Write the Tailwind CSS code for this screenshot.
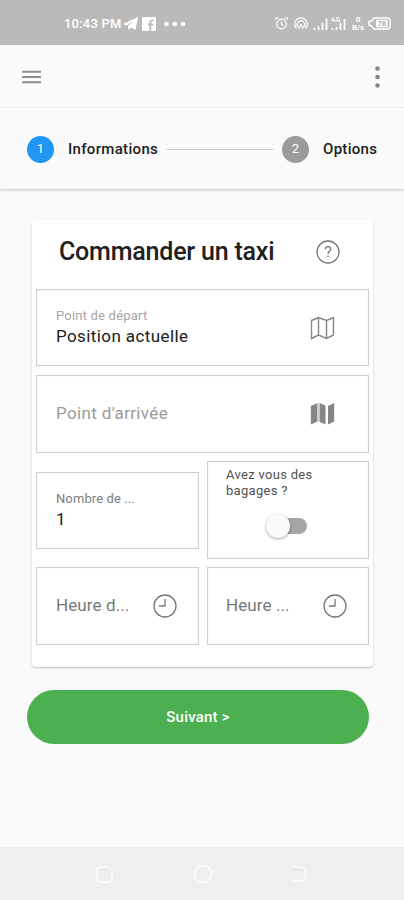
<!DOCTYPE html>
<html lang="fr">
  <head>
    <meta charset="UTF-8" />
    <meta name="viewport" content="width=device-width, initial-scale=1.0" />
    <title>Commander un taxi</title>
    <script src="https://cdn.jsdelivr.net/npm/@tailwindcss/browser@4"></script>
  </head>
  <body class="bg-[#fafafa] font-[Roboto,sans-serif] text-[#202020]">
    <div class="flex h-[900px] w-[404px] flex-col overflow-hidden">
      <!-- Status bar -->
      <div class="flex h-[45px] shrink-0 items-center bg-[#bababa] pl-16 pr-[13px] pt-[2px] text-white">
        <span class="w-[59px] whitespace-nowrap text-[13px] font-medium leading-none tracking-[0.2px]">10:43 PM</span>
        <svg class="h-[14px] w-[15px]" viewBox="0 0 15 14" fill="currentColor"><path d="M0 7 15 0 12.500 13 8 10.500 5.500 13 5 9 11 3.500 3.500 8.500Z" /></svg>
        <svg class="ml-1 h-[14px] w-[14px]" viewBox="0 0 14 14"><path fill="currentColor" d="M1 0h12a1 1 0 0 1 1 1v12a1 1 0 0 1-1 1H1a1 1 0 0 1-1-1V1a1 1 0 0 1 1-1Z" /><path d="M8.300 14V5.500Q8.300 3 11.500 3.400M6 7.500h5" fill="none" stroke="#bababa" stroke-width="1.800" /></svg>
        <svg class="ml-2 h-[6px] w-[22px]" viewBox="0 0 22 6" fill="currentColor"><circle cx="2.600" cy="3" r="2.300" /><circle cx="10.800" cy="3" r="2.300" /><circle cx="19" cy="3" r="2.300" /></svg>
        <div class="ml-auto flex items-center">
          <svg class="h-[13px] w-[13px]" viewBox="0 0 13 13" fill="none" stroke="currentColor" stroke-width="1.200"><circle cx="6.500" cy="7" r="4.800" /><path d="M.8 3V1h3M12.200 3V1h-3M6.500 4.500V7.300l2 1" /></svg>
          <svg class="ml-[6px] h-[13px] w-[14px]" viewBox="0 0 14 13" fill="none" stroke="currentColor" stroke-width="1.200"><path d="M2.500 11.500a6.300 6.300 0 1 1 9 0M4.300 10a3.700 3.700 0 1 1 5.400 0M7 7 4.800 12M7 7l2.200 5" /></svg>
          <svg class="ml-[5px] h-[13px] w-[15px]" viewBox="0 0 15 13" stroke="currentColor" stroke-width="1.700"><path d="M1.500 13v-2M5.500 13V9.500M9.500 13V6M13.500 13V1.500" /></svg>
          <svg class="ml-[3px] h-[15px] w-[15px]" viewBox="0 0 15 15" stroke="currentColor" stroke-width="1.700"><path d="M1.500 14v-2M5.500 14v-3M9.500 14V7M13.500 14V3" /><path d="M2.500 1.500 1 4.500h3M3.500 3v3M8.500 1.700H6v3.600h2.500v-2" fill="none" stroke-width="1.100" /></svg>
          <div class="ml-[5px] flex w-[14px] flex-col items-center text-[8px] font-bold leading-[8px]"><span>0</span><span>B/s</span></div>
          <svg class="ml-[3px] h-[13px] w-[23px]" viewBox="0 0 23 13"><path d="M6 1h13a3 3 0 0 1 3 3v5a3 3 0 0 1-3 3H6L3 8.500H1v-4h2Z" fill="none" stroke="currentColor" stroke-width="1.500" /><rect x="8" y="2.800" width="11.500" height="7.500" rx="1" fill="currentColor" /><text x="9.500" y="9.200" font-size="7.500" font-weight="700" fill="#aaa">78</text></svg>
        </div>
      </div>

      <!-- App bar -->
      <div class="flex h-[63px] shrink-0 items-center justify-between border-b border-[#f4f4f4] pl-[22px] pr-[23px] pt-[2px]">
        <svg class="h-[14px] w-[19px]" viewBox="0 0 19 14" fill="#8b8e8b"><path d="M0 .7h19v2H0zM0 6h19v2H0zM0 11.200h19v2H0z" /></svg>
        <svg class="mr-[1px] h-[22px] w-[5px]" viewBox="0 0 5 22" fill="#838383"><circle cx="2.500" cy="2.500" r="2.250" /><circle cx="2.500" cy="11" r="2.250" /><circle cx="2.500" cy="19.500" r="2.250" /></svg>
      </div>

      <!-- Stepper -->
      <div class="flex h-[81px] shrink-0 items-center pl-[27px] pr-[26px] pt-px text-[15px] font-medium shadow-[0_1px_3px_rgba(0,0,0,0.22)]">
        <span class="flex size-[27px] items-center justify-center rounded-full bg-[#2196f3] text-[13px] font-normal text-white">1</span>
        <span class="ml-[14px] w-[91px] whitespace-nowrap tracking-[0.32px]">Informations</span>
        <span class="ml-2 h-px flex-1 bg-[#c8c8c8]"></span>
        <span class="ml-[9px] flex size-[27px] items-center justify-center rounded-full bg-[#9b9b9b] text-[13px] font-normal text-white">2</span>
        <span class="ml-[14px] w-[55px] whitespace-nowrap tracking-[0.3px]">Options</span>
      </div>

      <!-- Order form -->
      <div class="ml-8 mt-[31px] h-[447px] w-[341px] shrink-0 rounded-[4px] bg-white px-1 shadow-[0_1px_2px_rgba(0,0,0,0.25)]">
        <div class="flex h-[69px] items-center justify-between pl-[23px] pr-[29px]">
          <h1 class="whitespace-nowrap pb-[6px] text-[25px] font-medium leading-none tracking-[-0.2px]">Commander un taxi</h1>
          <svg class="mb-[5px] size-6" viewBox="0 0 24 24" fill="none" stroke="#777" stroke-width="1.300"><circle cx="12" cy="12" r="11" /><path d="M9.300 9.300c0-1.800 1.200-2.700 2.700-2.700s2.700 1 2.700 2.500c0 2-2.700 2.300-2.700 4.900M12 15.500v1.600" /></svg>
        </div>

        <div class="flex h-[77px] items-center justify-between border border-[#cfcfcf] pl-[19px] pr-[33px] shadow-[inset_0_0_1px_rgba(0,0,0,0.2)]">
          <div class="pb-[2px]">
            <div class="text-[13px] leading-[20px] tracking-[0.2px] text-[#a5a5a5]">Point de départ</div>
            <div class="text-[17px] leading-[21px] tracking-[0.4px]">Position actuelle</div>
          </div>
          <svg class="h-[24px] w-[25px]" viewBox="0 0 25 24" fill="none" stroke="#858585" stroke-width="1.400"><path d="m1.500 4.500 7-3 8 3 7-3V19l-7 3.500-8-3.500-7 3.500ZM8.500 1.500V19M16.500 4.500v18" /></svg>
        </div>

        <div class="mt-[9px] flex h-[78px] items-center justify-between border border-[#cfcfcf] pl-[19px] pr-[33px] shadow-[inset_0_0_1px_rgba(0,0,0,0.2)]">
          <span class="text-[17px] tracking-[0.35px] text-[#9b9b9b]">Point d'arrivée</span>
          <svg class="h-[24px] w-[25px]" viewBox="0 0 25 24" fill="#868686"><path d="M.8 4 7 1.200v18.500L.8 22.600ZM9.500 1l6 2.500v19l-6-2.700ZM18 4l6.200-3v18.500L18 22.600Z" /><path d="M7 1.200 9.500 1v18.800L7 19.700Z" fill="#ccc" /></svg>
        </div>

        <div class="mt-2 flex items-center justify-between">
          <div class="flex h-[77px] w-[163px] flex-col justify-center border border-[#cfcfcf] pb-[2px] pl-[19px] shadow-[inset_0_0_1px_rgba(0,0,0,0.2)]">
            <div class="text-[13px] leading-[20px] tracking-[0.1px] text-[#7d7d7d]">Nombre de ...</div>
            <div class="text-[17px] leading-[21px]">1</div>
          </div>
          <div class="h-[98px] w-[162px] border border-[#cfcfcf] pl-[18px] pt-[5px] shadow-[inset_0_0_1px_rgba(0,0,0,0.2)]">
            <div class="text-[13px] leading-4 tracking-[0.3px] text-[#505050]">Avez vous des<br />bagages ?</div>
            <div class="ml-[40px] mt-[15px] flex h-6 w-[41px] items-center">
              <span class="relative size-6 shrink-0 rounded-full bg-[#fafafa] shadow-[0_1px_3px_rgba(0,0,0,0.35)]"></span>
              <span class="-ml-1 h-4 flex-1 rounded-r-full bg-[#a5a5a5]"></span>
            </div>
          </div>
        </div>

        <div class="mt-2 flex justify-between">
          <div class="flex h-[78px] w-[163px] items-center justify-between border border-[#cfcfcf] pl-[19px] pr-[21px] shadow-[inset_0_0_1px_rgba(0,0,0,0.2)]">
            <span class="text-[17px] tracking-[0.1px] text-[#777]">Heure d...</span>
            <svg class="size-6" viewBox="0 0 24 24" fill="none" stroke="#777" stroke-width="1.300"><circle cx="12" cy="12" r="11" /><path d="M12 5V12H6" /></svg>
          </div>
          <div class="flex h-[78px] w-[162px] items-center justify-between border border-[#cfcfcf] pl-[18px] pr-[21px] shadow-[inset_0_0_1px_rgba(0,0,0,0.2)]">
            <span class="text-[17px] tracking-[0.1px] text-[#777]">Heure ...</span>
            <svg class="size-6" viewBox="0 0 24 24" fill="none" stroke="#777" stroke-width="1.300"><circle cx="12" cy="12" r="11" /><path d="M12 5V12H6" /></svg>
          </div>
        </div>
      </div>

      <button class="ml-[27px] mt-[23px] h-[54px] w-[342px] shrink-0 rounded-full bg-[#4caf50] pt-px text-[15px] font-medium tracking-[0.2px] text-white">Suivant &gt;</button>

      <!-- System navigation -->
      <div class="mt-auto flex h-[53px] shrink-0 items-center justify-between bg-[#efefef] pl-[96px] pr-[96px]">
        <svg class="size-[18px]" viewBox="0 0 18 18" fill="none" stroke="#fafafa" stroke-width="2"><path d="M13 2H6Q1 2 1 7v5q0 5 5 5h5q5 0 5-5V6" /><path d="M3 4.500h8l3 2" stroke="#e3e3e3" stroke-width="1" /></svg>
        <svg class="size-5" viewBox="0 0 20 20" fill="none" stroke="#fafafa" stroke-width="2"><circle cx="10" cy="10" r="8.500" /></svg>
        <svg class="h-[18px] w-[17px]" viewBox="0 0 17 18" fill="none" stroke="#fafafa" stroke-width="2"><path d="M1 2h8q6 0 6 7t-6 7H1" /><path d="M1 4.500h7q4 0 5 3" stroke="#e3e3e3" stroke-width="1" /></svg>
      </div>
    </div>
  </body>
</html>
